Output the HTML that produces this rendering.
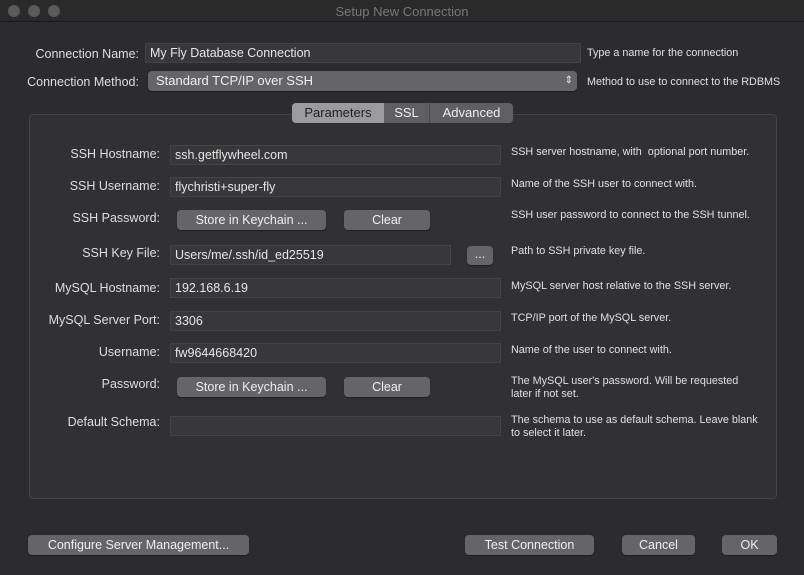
<!DOCTYPE html>
<html><head><meta charset="utf-8"><style>
*{margin:0;padding:0;box-sizing:border-box}
body{width:804px;height:575px;background:#2c2c2e;font-family:"Liberation Sans",sans-serif;color:#e2e2e2;position:relative;overflow:hidden}
.a{position:absolute;white-space:nowrap}
.tb{left:0;top:0;width:804px;height:22px;background:#2a2a2a;border-bottom:1px solid #1a1a1a}
.dot{top:5px;width:12px;height:12px;border-radius:50%;background:#5a5a5c}
.lbl{font-size:12.5px;text-align:right;color:#dedede}
.fld{background:#38383a;border:1px solid #444446;font-size:12.5px;padding:2px 4px;color:#e6e6e6;height:20px;line-height:15px}
.btn{background:#656567;border-radius:4px;font-size:12.5px;text-align:center;color:#eee;height:20px;line-height:20px;box-shadow:0 1px 1px rgba(0,0,0,.35)}
.hlp{font-size:10.8px;color:#e0e0e0;line-height:13px}
</style></head><body>
<div class="a tb"></div>
<div class="a dot" style="left:8px"></div><div class="a dot" style="left:28px"></div><div class="a dot" style="left:48px"></div>
<div class="a" style="left:0;width:804px;top:4px;text-align:center;font-size:13px;color:#787878">Setup New Connection</div>

<div class="a lbl" style="left:0;width:139px;top:47px">Connection Name:</div>
<div class="a fld" style="left:145px;top:43px;width:436px">My Fly Database Connection</div>
<div class="a hlp" style="left:587px;top:47px">Type a name for the connection</div>
<div class="a lbl" style="left:0;width:139px;top:75px">Connection Method:</div>
<div class="a btn" style="left:148px;top:71px;width:429px;text-align:left;padding-left:8px;font-size:13px">Standard TCP/IP over SSH<span style="position:absolute;right:4px;top:0;font-size:10px">⇕</span></div>
<div class="a hlp" style="left:587px;top:76px">Method to use to connect to the RDBMS</div>

<div class="a" style="left:29px;top:114px;width:748px;height:385px;background:#313133;border:1px solid #444446;border-radius:4px"></div>
<div class="a" style="left:292px;top:103px;width:221px;height:20px;border-radius:4px;background:#5f5f61;overflow:hidden;font-size:13px;line-height:20px">
<div class="a" style="left:0;top:0;width:92px;height:20px;background:#9b9b9d;color:#222;text-align:center">Parameters</div>
<div class="a" style="left:92px;top:0;width:46px;height:20px;text-align:center;color:#eee;border-right:1px solid #4a4a4c">SSL</div>
<div class="a" style="left:138px;top:0;width:83px;height:20px;text-align:center;color:#eee">Advanced</div>
</div>

<div class="a lbl" style="left:0;width:160px;top:147px">SSH Hostname:</div>
<div class="a fld" style="left:170px;top:145px;width:331px">ssh.getflywheel.com</div>
<div class="a hlp" style="left:511px;top:146px">SSH server hostname, with&nbsp; optional port number.</div>

<div class="a lbl" style="left:0;width:160px;top:179px">SSH Username:</div>
<div class="a fld" style="left:170px;top:177px;width:331px">flychristi+super-fly</div>
<div class="a hlp" style="left:511px;top:178px">Name of the SSH user to connect with.</div>

<div class="a lbl" style="left:0;width:160px;top:211px">SSH Password:</div>
<div class="a btn" style="left:177px;top:210px;width:149px">Store in Keychain ...</div>
<div class="a btn" style="left:344px;top:210px;width:86px">Clear</div>
<div class="a hlp" style="left:511px;top:209px">SSH user password to connect to the SSH tunnel.</div>

<div class="a lbl" style="left:0;width:160px;top:246px">SSH Key File:</div>
<div class="a fld" style="left:170px;top:245px;width:281px">Users/me/.ssh/id_ed25519</div>
<div class="a btn" style="left:467px;top:246px;width:26px;height:19px;line-height:16px">...</div>
<div class="a hlp" style="left:511px;top:245px">Path to SSH private key file.</div>

<div class="a lbl" style="left:0;width:160px;top:281px">MySQL Hostname:</div>
<div class="a fld" style="left:170px;top:278px;width:331px">192.168.6.19</div>
<div class="a hlp" style="left:511px;top:280px">MySQL server host relative to the SSH server.</div>

<div class="a lbl" style="left:0;width:160px;top:313px">MySQL Server Port:</div>
<div class="a fld" style="left:170px;top:311px;width:331px">3306</div>
<div class="a hlp" style="left:511px;top:312px">TCP/IP port of the MySQL server.</div>

<div class="a lbl" style="left:0;width:160px;top:345px">Username:</div>
<div class="a fld" style="left:170px;top:343px;width:331px">fw9644668420</div>
<div class="a hlp" style="left:511px;top:344px">Name of the user to connect with.</div>

<div class="a lbl" style="left:0;width:160px;top:377px">Password:</div>
<div class="a btn" style="left:177px;top:377px;width:149px">Store in Keychain ...</div>
<div class="a btn" style="left:344px;top:377px;width:86px">Clear</div>
<div class="a hlp" style="left:511px;top:375px">The MySQL user's password. Will be requested<br>later if not set.</div>

<div class="a lbl" style="left:0;width:160px;top:415px">Default Schema:</div>
<div class="a fld" style="left:170px;top:416px;width:331px"></div>
<div class="a hlp" style="left:511px;top:414px">The schema to use as default schema. Leave blank<br>to select it later.</div>

<div class="a btn" style="left:28px;top:535px;width:221px">Configure Server Management...</div>
<div class="a btn" style="left:465px;top:535px;width:129px">Test Connection</div>
<div class="a btn" style="left:622px;top:535px;width:73px">Cancel</div>
<div class="a btn" style="left:722px;top:535px;width:55px">OK</div>
</body></html>
